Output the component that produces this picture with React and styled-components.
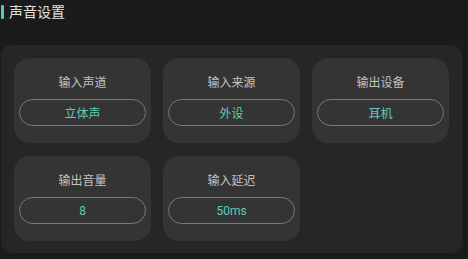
import React from 'react';
import styled, { createGlobalStyle } from 'styled-components';

const GlobalStyle = createGlobalStyle`
  html, body {
    margin: 0;
    padding: 0;
    background: #1b1b1b;
  }
  body {
    font-family: Roboto, "Noto Sans CJK SC", sans-serif;
  }
`;

const Page = styled.div`
  width: 468px;
  height: 259px;
  box-sizing: border-box;
  padding: 3px 6px 0 1px;
`;

const Title = styled.div`
  display: flex;
  align-items: center;
  gap: 5px;
  height: 18px;
  font-size: 14px;
  color: #e2e2e2;
  line-height: 18px;
`;

const Bar = styled.span`
  width: 3px;
  height: 14px;
  background: #52cbb6;
  border-radius: 1px;
`;

const Panel = styled.div`
  margin-top: 24px;
  background: #262626;
  border-radius: 10px;
  padding: 13px 12px 12px 13px;
`;

const Grid = styled.div`
  display: grid;
  grid-template-columns: repeat(3, 137px);
  grid-auto-rows: 85px;
  gap: 13px 12px;
`;

const Card = styled.div`
  background: #343434;
  border-radius: 16px;
  display: flex;
  flex-direction: column;
  align-items: center;
  padding: 16px 5px 0;
  box-sizing: border-box;
`;

const Label = styled.div`
  font-size: 12px;
  line-height: 18px;
  color: #c2c2c2;
`;

const Value = styled.div`
  margin-top: 7px;
  width: 127px;
  height: 27px;
  box-sizing: border-box;
  border: 1px solid #7a7a7a;
  border-radius: 14px;
  display: flex;
  align-items: center;
  justify-content: center;
  font-size: 12px;
  color: #5fcdb8;
`;

const items = [
  { label: '输入声道', value: '立体声' },
  { label: '输入来源', value: '外设' },
  { label: '输出设备', value: '耳机' },
  { label: '输出音量', value: '8' },
  { label: '输入延迟', value: '50ms' },
];

export default function App() {
  return (
    <Page>
      <GlobalStyle />
      <Title>
        <Bar />
        声音设置
      </Title>
      <Panel>
        <Grid>
          {items.map((it) => (
            <Card key={it.label}>
              <Label>{it.label}</Label>
              <Value>{it.value}</Value>
            </Card>
          ))}
        </Grid>
      </Panel>
    </Page>
  );
}
